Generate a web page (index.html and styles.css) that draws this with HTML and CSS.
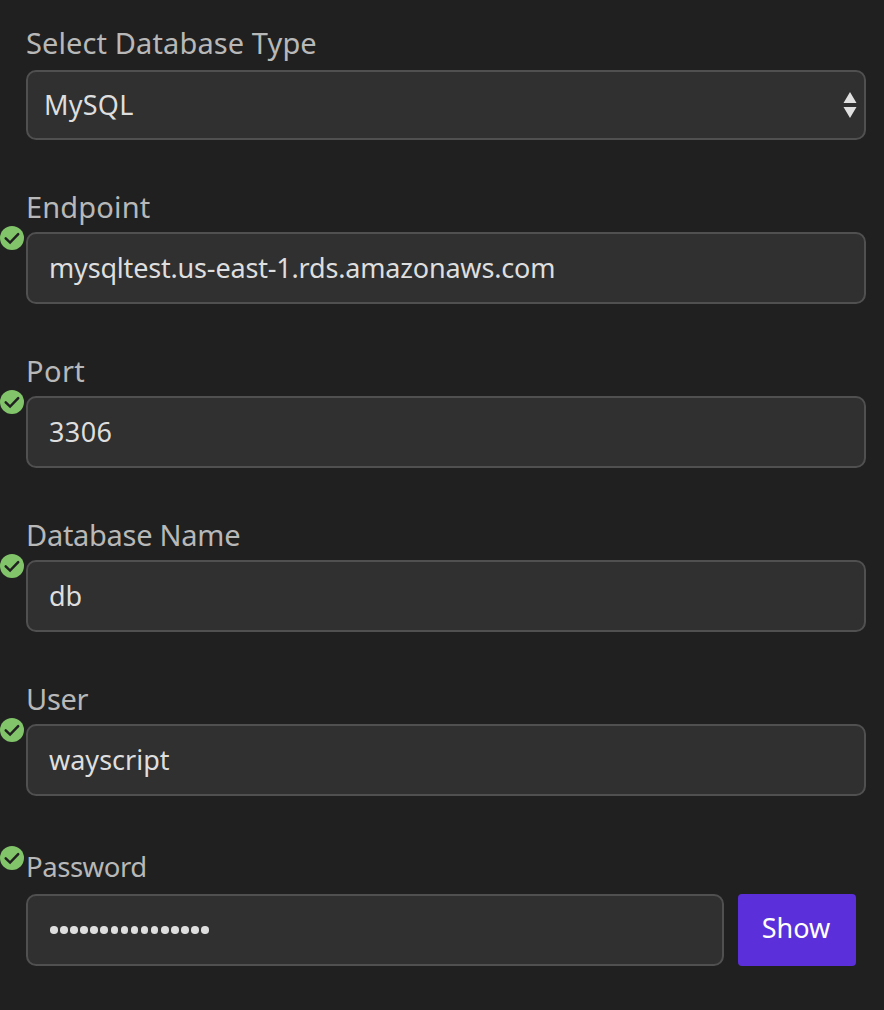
FILE: index.html
```html
<!DOCTYPE html>
<html lang="en">
<head>
<meta charset="utf-8">
<title>Database connection</title>
<link rel="stylesheet" href="styles.css">
</head>
<body>
<svg class="defs" width="0" height="0" aria-hidden="true">
  <symbol id="check" viewBox="0 0 24 24">
    <circle cx="12" cy="12" r="12" fill="#81c469"/>
    <path d="M5.7 12.3 L10.1 16.6 L18.2 8.2" fill="none" stroke="#202020" stroke-width="2.5" stroke-linecap="round" stroke-linejoin="miter"/>
  </symbol>
</svg>
<main class="form">
  <section class="field field-select">
    <div class="label"><span class="t-type">Select Database Type</span></div>
    <div class="control select"><span class="t-mysql">MySQL</span>
      <svg class="arrows" width="14" height="26" viewBox="0 0 14 26"><path d="M7 0 L13.5 11 H.5 Z M.5 15 H13.5 L7 26 Z" fill="#e0e0e0"/></svg>
    </div>
  </section>
  <section class="field">
    <div class="label"><span class="t-endpoint">Endpoint</span></div>
    <svg class="check"><use href="#check"/></svg>
    <div class="control"><span class="t-host">mysqltest.us-east-1.rds.amazonaws.com</span></div>
  </section>
  <section class="field">
    <div class="label"><span class="t-port">Port</span></div>
    <svg class="check"><use href="#check"/></svg>
    <div class="control"><span class="t-3306">3306</span></div>
  </section>
  <section class="field">
    <div class="label"><span class="t-dbname">Database Name</span></div>
    <svg class="check"><use href="#check"/></svg>
    <div class="control"><span class="t-db">db</span></div>
  </section>
  <section class="field">
    <div class="label"><span class="t-user">User</span></div>
    <svg class="check"><use href="#check"/></svg>
    <div class="control"><span class="t-way">wayscript</span></div>
  </section>
  <section class="field field-password">
    <div class="label label-small"><span class="t-password">Password</span></div>
    <svg class="check check-high"><use href="#check"/></svg>
    <div class="row">
      <div class="control dots"><i></i><i></i><i></i><i></i><i></i><i></i><i></i><i></i><i></i><i></i><i></i><i></i><i></i><i></i><i></i><i></i></div>
      <button class="show" type="button"><span class="t-show">Show</span></button>
    </div>
  </section>
</main>
</body>
</html>
```
FILE: styles.css
```css
* { box-sizing: border-box; }
body {
  margin: 0;
  background: #202020;
  color: #dedede;
  font-family: "Noto Sans", "Open Sans", sans-serif;
}
.defs { position: absolute; }
.form {
  height: 1010px;
  padding: 22px 18px 0 26px;
  display: flex;
  flex-direction: column;
}
.field { position: relative; height: 164px; }
.field-select { height: 162px; }
.field-password { padding-top: 8px; }
.label {
  height: 48px;
  line-height: 46px;
  font-size: 29px;
  color: #b8b8b8;
  white-space: nowrap;
}
.field-select .label { line-height: 42px; }
.field-password .label { height: 46px; line-height: 38px; font-size: 27.5px; }
.control {
  height: 72px;
  padding: 0 21px;
  display: flex;
  align-items: center;
  border: 2px solid #505050;
  border-radius: 10px;
  background: #303030;
  font-size: 27px;
  line-height: 40px;
  white-space: nowrap;
}
.select { height: 70px; padding: 0 7px 0 16px; justify-content: space-between; }
.arrows { display: block; }
.check {
  position: absolute;
  left: -26px;
  top: 42px;
  width: 24px;
  height: 24px;
}
.check-high { top: 6px; }
.row { display: flex; gap: 14px; }
.dots { width: 698px; padding-left: 22px; gap: 2.6px; }
.dots i { width: 7.5px; height: 7.5px; border-radius: 50%; background: #dedede; }
.show {
  width: 118px;
  height: 72px;
  padding: 0 2px 4px 0;
  border: 0;
  border-radius: 4px;
  background: #5b2fd9;
  color: #fff;
  font: 27px/40px "Noto Sans", "Open Sans", sans-serif;
}
.t-type { letter-spacing: 0.11px; }
.t-mysql { letter-spacing: 0.25px; }
.t-endpoint { letter-spacing: 0.15px; }
.t-host { letter-spacing: -0.18px; }
.t-port { letter-spacing: 0.4px; }
.t-3306 { letter-spacing: 0.4px; }
.t-dbname { letter-spacing: -0.28px; }
.t-user { letter-spacing: -0.3px; }
.t-password { letter-spacing: -0.45px; }
```
